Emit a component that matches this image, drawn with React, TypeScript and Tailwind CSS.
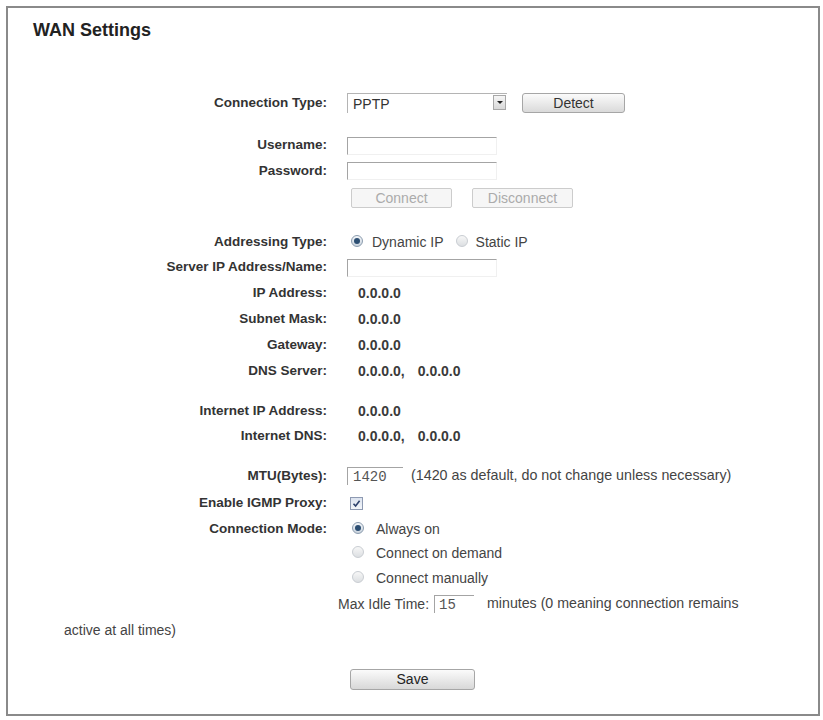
import React from "react";

function Radio({ on = false }: { on?: boolean }) {
  return (
    <span
      className={
        on
          ? "relative inline-block w-[12px] h-[12px] shrink-0 rounded-full border border-[#8c9cae] bg-gradient-to-b from-[#f4f7fa] to-[#c9d3dd]"
          : "relative inline-block w-[12px] h-[12px] shrink-0 rounded-full border border-[#c9cdd2] bg-gradient-to-b from-[#f7f7f7] to-[#dcdfe2]"
      }
    >
      {on && <span className="absolute left-[2px] top-[2px] w-[6px] h-[6px] rounded-full bg-[#2c4e72]" />}
    </span>
  );
}

function TextBox({ w = "w-[150px]" }: { w?: string }) {
  return (
    <span
      className={`inline-block ${w} h-[18px] border-t border-l border-[#a4a4a4] border-r border-b border-r-[#f0f0f0] border-b-[#f0f0f0] bg-white`}
    />
  );
}

function Row({ label, cls, children }: { label: string; cls: string; children?: React.ReactNode }) {
  return (
    <div className={`flex items-center ${cls}`}>
      <div className="w-[319px] shrink-0 text-right text-[13.5px] font-bold text-[#333]">{label}</div>
      <div className="ml-[20px] flex items-center text-[14px] text-[#444]">{children}</div>
    </div>
  );
}

function Value({ children }: { children: React.ReactNode }) {
  return <span className="ml-[11px] text-[14px] font-bold text-[#3a3a3a]">{children}</span>;
}

export default function App() {
  return (
    <div className="w-[823px] h-[720px] bg-white pt-[6px] pl-[6px] font-['Liberation_Sans',Arial,sans-serif]">
      <div className="w-[814px] h-[710px] border-2 border-[#8a8a8a] bg-white">
        <h1 className="mt-[12px] ml-[25px] text-[18px] leading-[20px] font-bold text-[#222]">WAN Settings</h1>

        {/* connection type */}
        <Row label="Connection Type:" cls="mt-[50px] h-[26px]">
          <div className="relative w-[160px] h-[20px] border-t border-l border-[#b4b4b4] pl-[5px] leading-[20px] text-[#333]">
            PPTP
            <span className="absolute right-[1px] top-[1px] flex items-center justify-center w-[13px] h-[15px] border border-[#a8a8a8] bg-gradient-to-b from-[#f6f6f6] to-[#d8d8d8]">
              <span className="w-0 h-0 border-l-[3px] border-r-[3px] border-t-[3px] border-l-transparent border-r-transparent border-t-[#222]" />
            </span>
          </div>
          <button className="ml-[15px] w-[103px] h-[20px] rounded-[3px] border border-[#a6a6a6] bg-gradient-to-b from-[#fbfbfb] to-[#dadada] text-[14px] leading-[18px] text-[#333]">
            Detect
          </button>
        </Row>

        <Row label="Username:" cls="mt-[17px] h-[25px]">
          <TextBox />
        </Row>
        <Row label="Password:" cls="h-[26px]">
          <TextBox />
        </Row>
        <Row label="" cls="mt-[1px] h-[26px]">
          <button className="ml-[4px] w-[101px] h-[20px] rounded-[2px] border border-[#cccccc] bg-[#f6f6f6] text-[14px] leading-[18px] text-[#ababab]">
            Connect
          </button>
          <button className="ml-[20px] w-[101px] h-[20px] rounded-[2px] border border-[#cccccc] bg-[#f6f6f6] text-[14px] leading-[18px] text-[#ababab]">
            Disconnect
          </button>
        </Row>

        {/* addressing */}
        <Row label="Addressing Type:" cls="mt-[18px] h-[26px]">
          <span className="ml-[4px]">
            <Radio on />
          </span>
          <span className="ml-[9px]">Dynamic IP</span>
          <span className="ml-[12px]">
            <Radio />
          </span>
          <span className="ml-[8px]">Static IP</span>
        </Row>
        <Row label="Server IP Address/Name:" cls="h-[25px]">
          <TextBox />
        </Row>
        <Row label="IP Address:" cls="h-[26px]">
          <Value>0.0.0.0</Value>
        </Row>
        <Row label="Subnet Mask:" cls="h-[26px]">
          <Value>0.0.0.0</Value>
        </Row>
        <Row label="Gateway:" cls="h-[26px]">
          <Value>0.0.0.0</Value>
        </Row>
        <Row label="DNS Server:" cls="h-[26px]">
          <Value>0.0.0.0,</Value>
          <span className="ml-[13px] text-[14px] font-bold text-[#3a3a3a]">0.0.0.0</span>
        </Row>

        <Row label="Internet IP Address:" cls="mt-[14px] h-[26px]">
          <Value>0.0.0.0</Value>
        </Row>
        <Row label="Internet DNS:" cls="h-[25px]">
          <Value>0.0.0.0,</Value>
          <span className="ml-[13px] text-[14px] font-bold text-[#3a3a3a]">0.0.0.0</span>
        </Row>

        {/* mtu and modes */}
        <Row label="MTU(Bytes):" cls="mt-[14px] h-[26px]">
          <span className="inline-block w-[56px] h-[18px] border-t border-l border-[#a4a4a4] pl-[5px] font-['Liberation_Mono',monospace] text-[14px] leading-[18px] text-[#555]">
            1420
          </span>
          <span className="ml-[8px] text-[14.3px]">(1420 as default, do not change unless necessary)</span>
        </Row>
        <Row label="Enable IGMP Proxy:" cls="h-[28px]">
          <span className="ml-[3px] flex items-center justify-center w-[13px] h-[13px] border border-[#8e9ab2] bg-gradient-to-b from-[#dce3ef] to-[#f3f6fa]">
            <svg width="9" height="9" viewBox="0 0 9 9">
              <path d="M1.5 4.8 L3.6 7 L7.6 1.8" fill="none" stroke="#2d416c" strokeWidth="1.6" />
            </svg>
          </span>
        </Row>
        <Row label="Connection Mode:" cls="h-[24px]">
          <span className="ml-[5px]">
            <Radio on />
          </span>
          <span className="ml-[12px]">Always on</span>
        </Row>
        <Row label="" cls="h-[25px]">
          <span className="ml-[5px]">
            <Radio />
          </span>
          <span className="ml-[12px]">Connect on demand</span>
        </Row>
        <Row label="" cls="h-[25px]">
          <span className="ml-[5px]">
            <Radio />
          </span>
          <span className="ml-[12px]">Connect manually</span>
        </Row>

        {/* idle time, wraps back to the left edge */}
        <div className="flex items-center h-[26px] pl-[330px] text-[14px] text-[#444]">
          <span>Max Idle Time:</span>
          <span className="ml-[5px] inline-block w-[40px] h-[18px] border-t border-l border-[#a4a4a4] pl-[4px] font-['Liberation_Mono',monospace] text-[14px] leading-[18px] text-[#555]">
            15
          </span>
          <span className="ml-[13px] text-[14.2px]">minutes (0 meaning connection remains</span>
        </div>
        <div className="h-[26px] pl-[56px] text-[14px] leading-[26px] text-[#444]">active at all times)</div>

        <div className="mt-[26px] flex">
          <button className="ml-[342px] w-[125px] h-[21px] rounded-[3px] border border-[#a6a6a6] bg-gradient-to-b from-[#fbfbfb] to-[#d8d8d8] text-[14px] leading-[19px] text-[#222]">
            Save
          </button>
        </div>
      </div>
    </div>
  );
}
